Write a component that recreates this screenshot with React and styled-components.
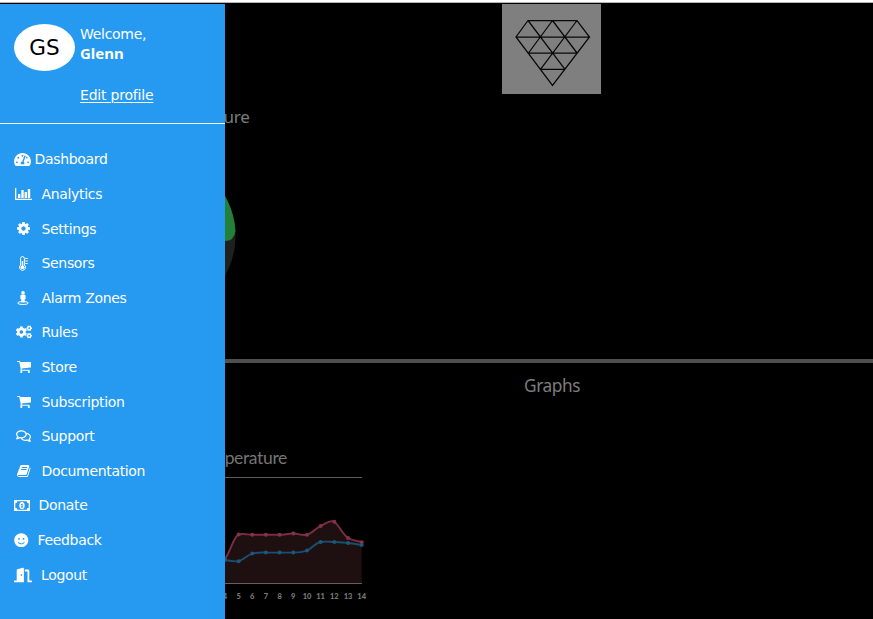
import React from "react";
import styled, { createGlobalStyle } from "styled-components";
import {
  FaTachometerAlt,
  FaCogs,
  FaRegComments,
  FaSmile,
  FaDoorOpen,
} from "react-icons/fa";

const GlobalStyle = createGlobalStyle`
  *, *::before, *::after { box-sizing: border-box; }
  body { margin: 0; background: #000; overflow: hidden; }
`;

const Page = styled.div`
  position: relative;
  width: 873px;
  height: 619px;
  overflow: hidden;
  background: #000;
  border-top: 2px solid #fff;
  font-family: "DejaVu Sans", sans-serif;
`;

const TopEdge = styled.div`
  height: 1px;
  background: #b5b5b5;
`;

const Main = styled.main`
  display: flex;
  flex-direction: column;
`;

const GaugePanel = styled.section`
  display: flex;
  flex-direction: column;
  height: 360px;
  padding-top: 1px;
  border-bottom: 4px solid #4f4f4f;
`;

const LogoBox = styled.div`
  width: 99px;
  height: 90px;
  margin-left: 502px;
  background: #7f7f7f;
  svg { display: block; }
`;

const PanelTitle = styled.h2`
  margin: 11px 0 0;
  padding-left: 149px;
  font: 400 17px/24px "Noto Sans", sans-serif;
  letter-spacing: -0.2px;
  color: #7d7d7d;
`;

const Gauge = styled.svg`
  display: block;
  flex: none;
  width: 170px;
  height: 170px;
  margin: 22px 0 0 70px;
`;

const GraphPanel = styled.section`
  display: flex;
  flex-direction: column;
  height: 256px;
`;

const GraphsTitle = styled.h2`
  margin: 11px 0 0 524px;
  font: 400 17.3px/24px "Noto Sans", sans-serif;
  letter-spacing: -0.4px;
  color: #7d7d7d;
`;

const ChartTitle = styled.h3`
  margin: 48px 0 0 172px;
  width: 115px;
  display: flex;
  justify-content: flex-end;
  white-space: nowrap;
  font: 400 17.5px/24px Lato, sans-serif;
  letter-spacing: -0.35px;
  color: #747474;
`;

const Chart = styled.svg`
  display: block;
  flex: none;
  width: 180px;
  height: 140px;
  margin: -6px 0 0 200px;
  text {
    font: 900 7.5px Lato, sans-serif;
    fill: #7a7a7a;
    text-anchor: middle;
  }
`;

const Drawer = styled.aside`
  position: absolute;
  top: 2px;
  left: 0;
  width: 225px;
  height: 615px;
  background: #2699f1;
  color: #fff;
`;

const Profile = styled.header`
  display: flex;
  height: 120px;
  padding: 20px 0 0 14px;
  border-bottom: 1px solid #fff;
`;

const Avatar = styled.div`
  display: flex;
  align-items: center;
  justify-content: center;
  width: 61px;
  height: 47px;
  border-radius: 50%;
  background: #fff;
  color: #000;
  font: 21.5px "DejaVu Sans", sans-serif;
`;

const Greeting = styled.div`
  display: flex;
  flex-direction: column;
  margin-left: 5px;
  font-size: 14px;
  letter-spacing: -0.3px;
  line-height: 20px;
`;

const UserName = styled.strong`
  margin: -1px 0 1px;
  font-family: "Noto Sans", sans-serif;
  font-size: 15px;
  font-weight: 700;
  letter-spacing: 0;
`;

const EditLink = styled.a`
  margin-top: 21px;
  align-self: flex-start;
  letter-spacing: -0.2px;
  text-decoration: underline;
  text-underline-offset: 2px;
  text-decoration-thickness: 1px;
`;

const Menu = styled.nav`
  display: flex;
  flex-direction: column;
  padding-top: 18px;
`;

const MenuItem = styled.a`
  display: flex;
  align-items: center;
  height: 34.61px;
  font-size: 14px;
  letter-spacing: -0.33px;
  white-space: nowrap;
`;

const IconSlot = styled.span`
  display: flex;
  align-items: center;
  flex: none;
  width: ${(p) => p.$textX}px;
  padding-left: ${(p) => p.$x}px;
  svg {
    display: block;
    flex: none;
    width: ${(p) => p.$w}px;
    height: ${(p) => p.$h}px;
    fill: currentColor;
  }
`;

const BarsIcon = () => (
  <svg viewBox="0 0 17 12">
    <path d="M0 0H1.300V10.800H17V12H0ZM3 6H5.400V10H3ZM6.300 2H8.700V10H6.300ZM9.600 4H12V10H9.600ZM12.800 1H15.200V10H12.800Z" />
  </svg>
);

const CogIcon = () => (
  <svg viewBox="128 128 1536 1536">
    <path d="M1152 896q0-106-75-181t-181-75-181 75-75 181 75 181 181 75 181-75 75-181zm512-109v222q0 12-8 23t-20 13l-185 28q-19 54-39 91 35 50 107 138 10 12 10 25t-9 23q-27 37-99 108t-94 71q-12 0-26-9l-138-108q-44 23-91 38-16 136-29 186-7 28-36 28h-222q-14 0-24.500-8.500t-11.500-21.500l-28-184q-49-16-90-37l-141 107q-10 9-25 9-14 0-25-11-126-114-165-168-7-10-7-23 0-12 8-23 15-21 51-66.500t54-70.500q-27-50-41-99l-183-27q-13-2-21-12.500t-8-23.500v-222q0-12 8-23t19-13l186-28q14-46 39-92-40-57-107-138-10-12-10-24 0-10 9-23 26-36 98.500-107.500t94.500-71.500q13 0 26 10l138 107q44-23 91-38 16-136 29-186 7-28 36-28h222q14 0 24.500 8.500t11.500 21.500l28 184q49 16 90 37l142-107q9-9 24-9 13 0 25 10 129 119 165 170 7 8 7 22 0 12-8 23-15 21-51 66.500t-54 70.500q26 50 41 98l183 28q13 2 21 12.500t8 23.500z" />
  </svg>
);

const ThermometerIcon = () => (
  <svg viewBox="0 0 9 15">
    <path d="M1.600 9V2.500A1.900 1.900 0 0 1 5.400 2.500V9A3 3 0 1 1 1.600 9Z" fill="none" stroke="currentColor" strokeWidth="1" />
    <circle cx="3.500" cy="11.300" r="1.900" />
    <path d="M2.800 5H4.200V11H2.800ZM6.300 2H8.700V3H6.300ZM6.300 4.500H8.700V5.500H6.300ZM6.300 7H8.700V8H6.300Z" />
  </svg>
);

const CartIcon = () => (
  <svg viewBox="64 256 1664 1408" preserveAspectRatio="none">
    <path d="M704 1536q0 52-38 90t-90 38-90-38-38-90 38-90 90-38 90 38 38 90zm896 0q0 52-38 90t-90 38-90-38-38-90 38-90 90-38 90 38 38 90zm128-1088v512q0 24-16.500 42.500t-40.500 21.500l-1044 122q13 60 13 70 0 16-24 64h920q26 0 45 19t19 45-19 45-45 19h-1024q-26 0-45-19t-19-45q0-11 8-31.500t16-36 21.500-40 15.500-29.500l-177-823h-204q-26 0-45-19t-19-45 19-45 45-19h256q16 0 28.500 6.500t19.500 15.500 13 24.500 8 26 5.500 29.500 4.500 26h1201q26 0 45 19t19 45z" />
  </svg>
);

const BookIcon = () => (
  <svg viewBox="64 128 1664 1536" preserveAspectRatio="none">
    <path d="M1703 478q40 57 18 129l-275 906q-19 64-76.500 107.500t-122.500 43.500h-923q-77 0-148.500-53.500t-99.500-131.500q-24-67-2-127 0-4 3-27t4-37q1-8-3-21.500t-3-19.500q2-11 8-21t16.500-23.500 16.500-23.500q23-38 45-91.500t30-91.500q3-10 .5-30t-.5-28q3-11 17-28t17-23q21-36 42-92t25-90q1-9-2.500-32t.5-28q4-13 22-30.500t22-22.500q19-26 42.500-84.500t27.500-96.500q1-8-3-25.500t-2-26.500q2-8 9-18t18-23 17-21q8-12 16.500-30.500t15-35 16-36 19.500-32 26.500-23.500 36-11.500 47.500 5.500l-1 3q38-9 51-9h761q74 0 114 56t18 130l-274 906q-36 119-71.500 153.500t-128.500 34.500h-869q-27 0-38 15-11 16-1 43 24 70 144 70h923q29 0 56-15.500t35-41.500l300-987q7-22 5-57 38 15 59 43zm-1064 2q-4 13 2 22.500t20 9.500h608q13 0 25.500-9.500t16.500-22.500l21-64q4-13-2-22.500t-20-9.500h-608q-13 0-25.500 9.500t-16.500 22.500zm-83 256q-4 13 2 22.500t20 9.500h608q13 0 25.500-9.500t16.500-22.500l21-64q4-13-2-22.500t-20-9.500h-608q-13 0-25.500 9.500t-16.500 22.500z" />
  </svg>
);

const PersonZoneIcon = () => (
  <svg viewBox="0 0 12 14">
    <ellipse cx="6" cy="12" rx="5.300" ry="1.500" fill="none" stroke="currentColor" strokeWidth="1" />
    <circle cx="6" cy="1.900" r="1.800" />
    <path d="M4.500 3.800H7.500Q8.600 3.800 8.600 5V8H7.800V11.600H4.200V8H3.400V5Q3.400 3.800 4.500 3.800Z" />
  </svg>
);

const BanknoteIcon = () => (
  <svg viewBox="0 0 16 11">
    <path fillRule="evenodd" d="M0 0H16V11H0ZM3.300 1.300Q3.300 3.300 1.300 3.300V7.700Q3.300 7.700 3.300 9.700H12.700Q12.700 7.700 14.700 7.700V3.300Q12.700 3.300 12.700 1.300Z" />
    <path fillRule="evenodd" d="M8 2A2.700 3.500 0 1 1 8 9A2.700 3.500 0 1 1 8 2ZM7 4.200V5.100H7.600V6.600H7V7.400H9.200V6.600H8.600V3.700H7.900Z" />
  </svg>
);

const items = [
  { label: "Dashboard", icon: FaTachometerAlt, x: 14, w: 17, h: 15, textX: 34.5 },
  { label: "Analytics", icon: BarsIcon, x: 15, w: 17, h: 12, textX: 41.5 },
  { label: "Settings", icon: CogIcon, x: 17, w: 13, h: 13, textX: 41.5 },
  { label: "Sensors", icon: ThermometerIcon, x: 19, w: 9, h: 15, textX: 41.5 },
  { label: "Alarm Zones", icon: PersonZoneIcon, x: 17, w: 12, h: 14, textX: 41.5 },
  { label: "Rules", icon: FaCogs, x: 15.5, w: 16, h: 14, textX: 41.5 },
  { label: "Store", icon: CartIcon, x: 17, w: 14, h: 12, textX: 41.5 },
  { label: "Subscription", icon: CartIcon, x: 17, w: 14, h: 12, textX: 41.5 },
  { label: "Support", icon: FaRegComments, x: 16, w: 15, h: 14, textX: 41.5 },
  { label: "Documentation", icon: BookIcon, x: 17, w: 13.5, h: 12, textX: 41.5 },
  { label: "Donate", icon: BanknoteIcon, x: 14, w: 16, h: 11, textX: 38.5 },
  { label: "Feedback", icon: FaSmile, x: 14, w: 14.5, h: 14.5, textX: 37.5 },
  { label: "Logout", icon: FaDoorOpen, x: 14, w: 18, h: 16, textX: 41 },
];

const redPoints = [[38.6, 70.5], [52.3, 70.8], [65.9, 70.8], [79.6, 70.8], [93.3, 69.5], [107, 70.8], [120.6, 62], [134.3, 57.8], [148, 74], [161.7, 78.2]];
const bluePoints = [[25, 96], [38.6, 97.2], [52.3, 89.6], [65.9, 88.6], [79.6, 88.6], [93.3, 88.6], [107, 86.6], [120.6, 78], [134.3, 78], [148, 79], [161.7, 81]];
const redLine = "M18 108C22 102 24 98 25 95C30 88 34 72 38.600 70.500C43 69 48 70.800 52.300 70.800H79.600C84 70.800 88 69.500 93.300 69.500S102 72 107 70.800S116 64 120.600 62S130 55 134.300 57.800S143 71 148 74S156 76 161.700 78.200";
const blueLine = "M18 94L25 96C30 97 34 98 38.600 97.200S47 91 52.300 89.600S61 88.600 65.900 88.600H93.300C98 88.600 103 88 107 86.600S115 79 120.600 78S130 78 134.300 78S143 78.500 148 79S156 80 161.700 81";

function DiamondLogo() {
  return (
    <svg width="99" height="90" viewBox="0 0 99 90" fill="none" stroke="#080808" strokeWidth="1.25">
      <path d="M26 16.500H75L87.500 33L50.500 81.500L14 33ZM14 33H87.500M26.500 49H75M38.500 65.300H63M26 16.500L63 65.300M50.500 16.500L75 49M75 16.500L38.500 65.300M50.500 16.500L26.500 49" />
    </svg>
  );
}

function TemperatureChart() {
  return (
    <Chart viewBox="0 0 180 140">
      <path d="M0 13.500H162" stroke="#5c5c5c" strokeWidth="1.200" />
      <path d={`${redLine}V119H18Z`} fill="#1e0f11" />
      <path d="M0 119.500H162" stroke="#686060" strokeWidth="1.200" />
      <path d={redLine} fill="none" stroke="#7b2e42" strokeWidth="1.900" />
      <path d={blueLine} fill="none" stroke="#1b4e70" strokeWidth="1.900" />
      {redPoints.map(([x, y]) => <circle key={x} cx={x} cy={y} r="2" fill="#84334a" />)}
      {bluePoints.map(([x, y]) => <circle key={x} cx={x} cy={y} r="2" fill="#1d577c" />)}
      {bluePoints.map(([x], i) => <text key={x} x={x} y="135">{i + 4}</text>)}
    </Chart>
  );
}

export default function App() {
  return (
    <>
      <GlobalStyle />
      <Page>
        <TopEdge />
        <Main>
          <GaugePanel>
            <LogoBox><DiamondLogo /></LogoBox>
            <PanelTitle>Temperature</PanelTitle>
            <Gauge viewBox="0 0 170 170">
              <circle cx="84.500" cy="85" r="81" fill="#202020" />
              <path d="M84 4A81 81 0 0 1 165.500 80Q164 90 155 90H84Z" fill="#238039" />
            </Gauge>
          </GaugePanel>
          <GraphPanel>
            <GraphsTitle>Graphs</GraphsTitle>
            <ChartTitle>Temperature</ChartTitle>
            <TemperatureChart />
          </GraphPanel>
        </Main>
        <Drawer>
          <Profile>
            <Avatar>GS</Avatar>
            <Greeting>
              <span>Welcome,</span>
              <UserName>Glenn</UserName>
              <EditLink>Edit profile</EditLink>
            </Greeting>
          </Profile>
          <Menu>
            {items.map(({ label, icon: Icon, x, w, h, textX }) => (
              <MenuItem key={label}>
                <IconSlot $x={x} $w={w} $h={h} $textX={textX}><Icon /></IconSlot>
                <span>{label}</span>
              </MenuItem>
            ))}
          </Menu>
        </Drawer>
      </Page>
    </>
  );
}
